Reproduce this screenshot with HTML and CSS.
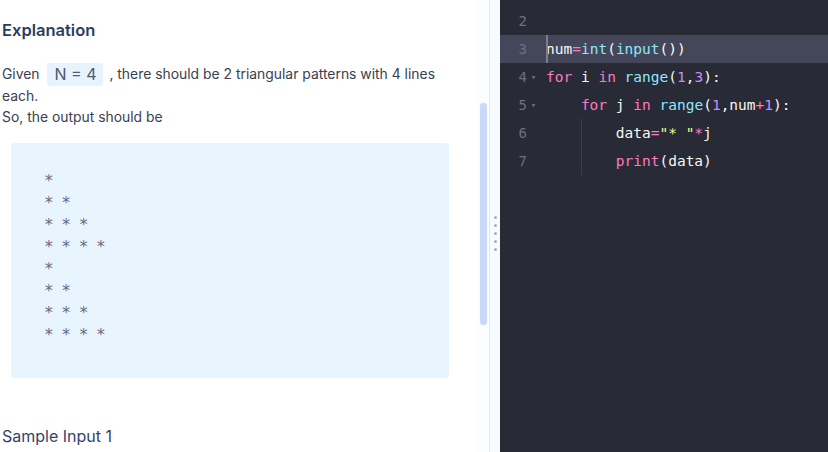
FILE: index.html
```html
<!DOCTYPE html>
<html>
<head>
<meta charset="utf-8">
<link rel="stylesheet" href="styles.css">
</head>
<body>
<div class="app">
  <section class="left">
    <div class="content">
      <h2 class="heading">Explanation</h2>
      <p class="para">Given <code class="inline">N = 4</code> , there should be 2 triangular patterns with 4 lines each.<br>So, the output should be</p>
      <pre class="output">*
* *
* * *
* * * *
*
* *
* * *
* * * *</pre>
      <h3 class="sample">Sample Input 1</h3>
    </div>
    <div class="track"><div class="thumb"></div></div>
  </section>
  <div class="splitter">
    <div class="dots"><span></span><span></span><span></span><span></span><span></span></div>
  </div>
  <section class="editor">
    <div class="line"><div class="gutter"><span class="num">2</span><span class="fold"></span></div><div class="code"></div></div>
    <div class="line active"><div class="gutter"><span class="num">3</span><span class="fold"></span></div><div class="code"><span class="cursor"></span><span class="fg">num</span><span class="pk">=</span><span class="cy">int</span><span class="fg">(</span><span class="cy">input</span><span class="fg">())</span></div></div>
    <div class="line"><div class="gutter"><span class="num">4</span><span class="fold">▾</span></div><div class="code"><span class="pk">for</span><span class="fg"> i </span><span class="pk">in</span><span class="fg"> </span><span class="cy">range</span><span class="fg">(</span><span class="pu">1</span><span class="fg">,</span><span class="pu">3</span><span class="fg">):</span></div></div>
    <div class="line"><div class="gutter"><span class="num">5</span><span class="fold">▾</span></div><div class="code"><span class="indent"></span><span class="pk">for</span><span class="fg"> j </span><span class="pk">in</span><span class="fg"> </span><span class="cy">range</span><span class="fg">(</span><span class="pu">1</span><span class="fg">,num</span><span class="pk">+</span><span class="pu">1</span><span class="fg">):</span></div></div>
    <div class="line"><div class="gutter"><span class="num">6</span><span class="fold"></span></div><div class="code"><span class="indent"></span><span class="indent guide"></span><span class="fg">data</span><span class="pk">=</span><span class="ye">"* "</span><span class="pk">*</span><span class="fg">j</span></div></div>
    <div class="line"><div class="gutter"><span class="num">7</span><span class="fold"></span></div><div class="code"><span class="indent"></span><span class="indent guide"></span><span class="pk">print</span><span class="fg">(data)</span></div></div>
  </section>
</div>
</body>
</html>
```

FILE: styles.css
```css
* { box-sizing: border-box; }
html, body { margin: 0; padding: 0; }
body { width: 828px; height: 452px; overflow: hidden; background: #ffffff; }

.app { display: flex; height: 452px; }

.left { width: 489px; display: flex; background: #ffffff; }
.content { flex: 1; padding: 0 0 0 2px; overflow: hidden; font-family: Inter, "Noto Sans", sans-serif; }

.heading {
  margin: 18px 0 0 0;
  font-size: 16.5px;
  line-height: 24px;
  font-weight: 600;
  color: #2b3c64;
}
.para {
  margin: 21px 0 0 0;
  max-width: 445px;
  font-size: 13.9px;
  line-height: 21px;
  color: #3a4150;
}
.inline {
  display: inline-block;
  font-family: Inter, "Noto Sans", sans-serif;
  font-size: 16px;
  line-height: 21px;
  padding: 1px 7px;
  margin: 0 2px 0 4px;
  background: #e8f4fd;
  color: #4c5a73;
  border-radius: 2px;
  vertical-align: -1px;
}
.output {
  margin: 15px 0 0 9px;
  width: 438px;
  height: 235px;
  padding: 27px 0 0 33px;
  background: #e9f5fe;
  border-radius: 4px;
  font-family: "DejaVu Sans Mono", monospace;
  font-size: 16px;
  letter-spacing: -0.96px;
  line-height: 22px;
  color: #656d7c;
}
.sample {
  margin: 46px 0 0 0;
  font-size: 16px;
  line-height: 24px;
  font-weight: 400;
  color: #34436a;
}

.track { width: 12px; background: #fafcfe; padding: 103px 0 0 3px; }
.thumb { width: 7px; height: 222px; background: #c9d9f7; border-radius: 3px; }

.splitter {
  width: 11px;
  border-left: 1px solid #e1e8f2;
  background: #f7faff;
  display: flex;
  justify-content: center;
  padding-top: 216px;
}
.dots { display: flex; flex-direction: column; gap: 5px; }
.dots span { width: 3px; height: 3px; border-radius: 50%; background: #aab0b8; display: block; }

.editor {
  flex: 1;
  background: #282a36;
  padding-top: 7px;
  font-family: "DejaVu Sans Mono", monospace;
  font-size: 14.5px;
}
.line { display: flex; height: 28px; line-height: 28px; }
.line.active { background: #44475a; }
.gutter { width: 46px; display: flex; color: #6c7082; font-size: 14px; }
.num { width: 27px; text-align: right; }
.fold { width: 13px; text-align: center; font-size: 9px; color: #6c7082; }
.code { position: relative; white-space: pre; color: #f8f8f2; }
.cursor { position: absolute; left: 0; top: 0; width: 2px; height: 28px; background: #7b7f90; }
.indent { display: inline-block; width: 34.9px; height: 28px; vertical-align: top; }
.indent.guide { border-left: 1px solid #3c3f4e; }
.fg { color: #f8f8f2; }
.pk { color: #ff79c6; }
.cy { color: #8be9fd; }
.pu { color: #bd93f9; }
.ye { color: #f1fa8c; }
```
